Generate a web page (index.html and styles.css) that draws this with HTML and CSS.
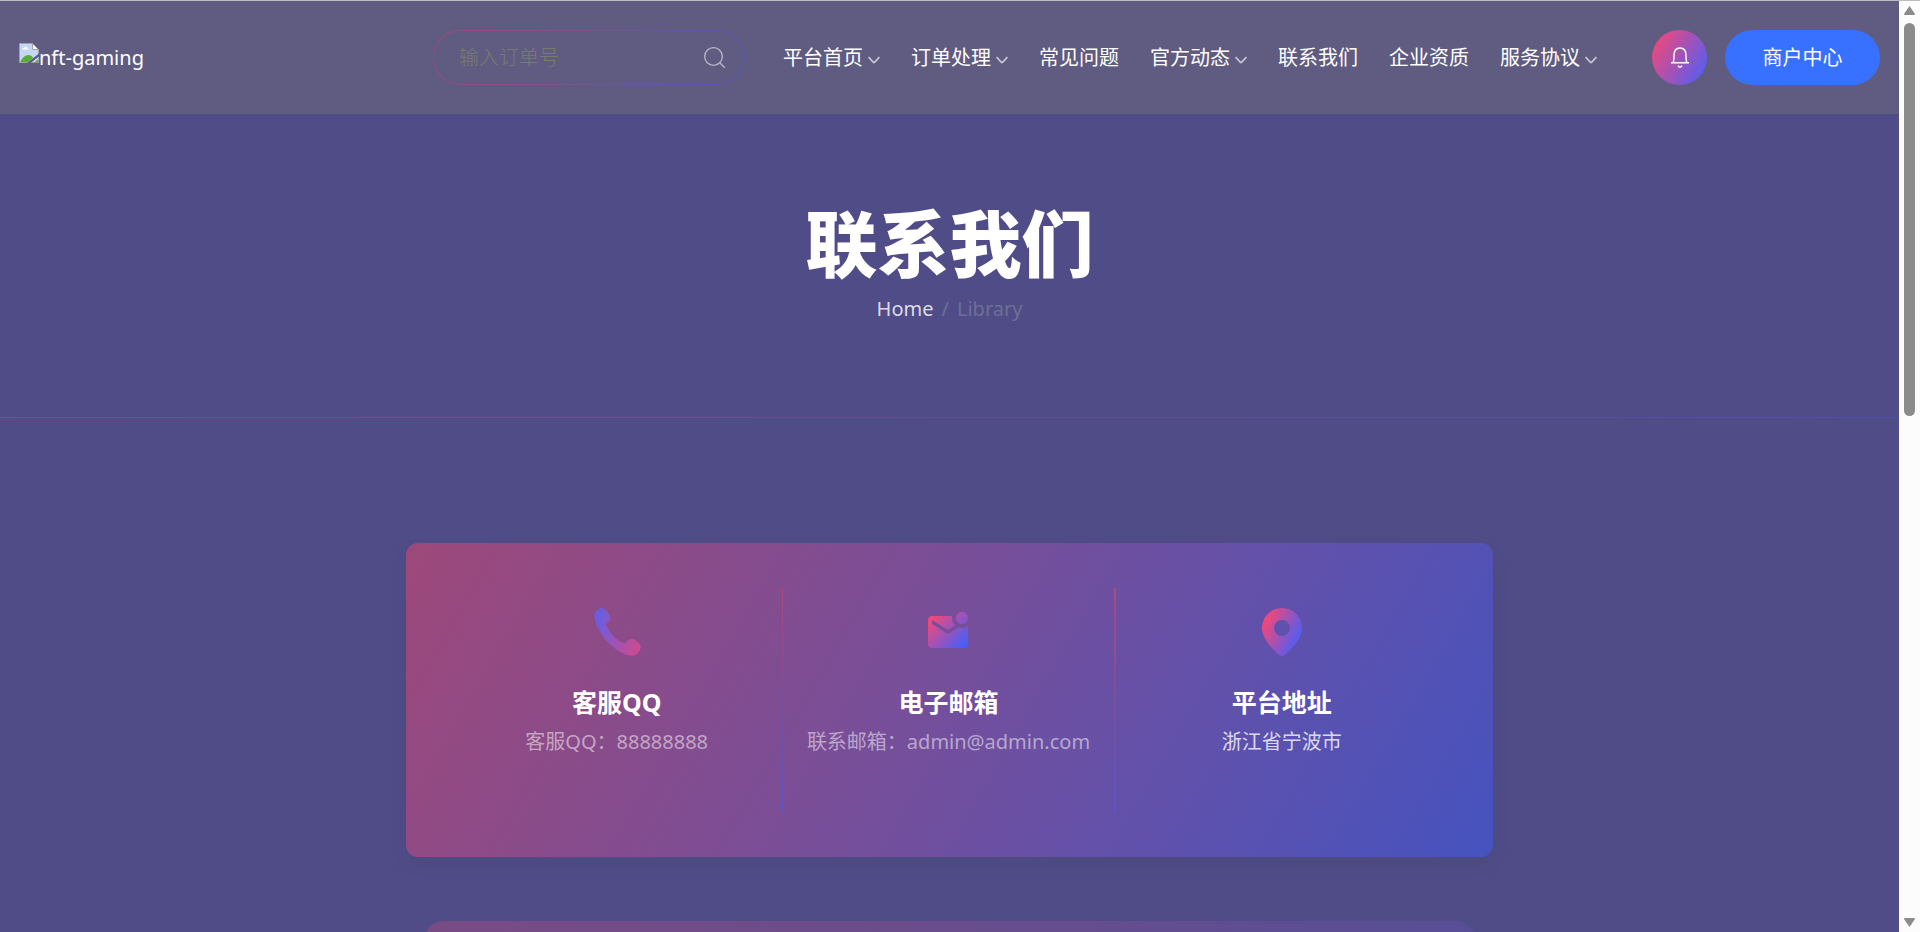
FILE: index.html
```html
<!DOCTYPE html>
<html lang="zh-CN">
<head>
<meta charset="utf-8">
<title>联系我们</title>
<link rel="stylesheet" href="styles.css">
</head>
<body>
<div class="page">
  <header class="header">
    <a class="logo" href="#">
      <svg class="logo-icon" viewBox="0 0 20 20" aria-hidden="true">
        <path d="M.5.5h13l6 6v13H.5z" fill="#c6d6f5" stroke="#a3a3a3"/>
        <path d="M3 6.500q0-1.500 2-1.500 1-2 2.500-1 1 .5 1 1.500 1.500 0 1.500 1z" fill="#fff"/>
        <path d="M1 19q3-6 8-7 4 0 5 3l-5 4z" fill="#57ad35"/>
        <path d="M13.500.5v6h6z" fill="#fff" stroke="#a3a3a3"/>
        <path d="M20 10.500v3L11.500 20H8z" fill="#605b80"/>
        <path d="M15 19.500l4-3v3z" fill="#57ad35"/>
      </svg>
      <span>nft-gaming</span>
    </a>
    <form class="search">
      <input class="search-input" type="text" placeholder="输入订单号" aria-label="输入订单号">
      <button class="search-button" type="button" aria-label="搜索">
        <svg class="search-icon" viewBox="0 0 22 22"><circle cx="9.500" cy="9.500" r="8.800"/><path d="M15.800 15.800l5 5"/></svg>
      </button>
    </form>
    <nav class="nav">
      <a href="#">平台首页<svg class="chevron" viewBox="0 0 12 8"><path d="M.5 1l4.800 5.200q.7.700 1.400 0L11.500 1"/></svg></a>
      <a href="#">订单处理<svg class="chevron" viewBox="0 0 12 8"><path d="M.5 1l4.800 5.200q.7.700 1.400 0L11.500 1"/></svg></a>
      <a href="#">常见问题</a>
      <a href="#">官方动态<svg class="chevron" viewBox="0 0 12 8"><path d="M.5 1l4.800 5.200q.7.700 1.400 0L11.500 1"/></svg></a>
      <a href="#">联系我们</a>
      <a href="#">企业资质</a>
      <a href="#">服务协议<svg class="chevron" viewBox="0 0 12 8"><path d="M.5 1l4.800 5.200q.7.700 1.400 0L11.500 1"/></svg></a>
    </nav>
    <div class="actions">
      <button class="bell" type="button" aria-label="通知">
        <svg class="bell-icon" viewBox="0 0 20 22"><path d="M1 15.800h18M3.200 15.500C4 13.500 4 11.500 4 8.500 4 4 6 1 10 1s6 3 6 7.500c0 3 0 5 .8 7M8 18.800q2 2.600 4 0"/></svg>
      </button>
      <a class="merchant" href="#">商户中心</a>
    </div>
  </header>

  <section class="hero">
    <h1>联系我们</h1>
    <ol class="breadcrumb">
      <li><a href="#">Home</a></li>
      <li>Library</li>
    </ol>
  </section>

  <main class="content">
    <section class="contact">
      <article class="contact-item">
        <svg class="contact-icon" viewBox="0 0 144 144" aria-hidden="true">
          <defs><linearGradient id="g-phone" x1="1" y1=".7" x2="0" y2=".4"><stop stop-color="#cf4a8e"/><stop offset="1" stop-color="#6a5de0"/></linearGradient></defs>
          <path fill="url(#g-phone)" d="M26 0C34 0 52 18 52 30C52 40 38 44 40 51C48 72 76 104 94 105C101 105 104 92 116 92C126 92 143 107 143 117C143 128 130 143 117 143C70 143 4 70 4 22C4 14 16 0 26 0Z"/>
        </svg>
        <h2>客服QQ</h2>
        <p>客服QQ：88888888</p>
      </article>
      <article class="contact-item">
        <svg class="contact-icon" viewBox="0 0 24 24" aria-hidden="true">
          <defs><linearGradient id="g-mail" gradientUnits="userSpaceOnUse" x1="3" y1="5" x2="20" y2="20"><stop stop-color="#f74775"/><stop offset="1" stop-color="#3f60ff"/></linearGradient></defs>
          <path fill="url(#g-mail)" d="M22 8.980V18c0 1.100-.9 2-2 2H4c-1.100 0-2-.9-2-2V6c0-1.100.9-2 2-2h10.100c-.06.32-.1.66-.1 1 0 1.480.65 2.790 1.670 3.710L12 11 4 6v2l8 5 5.300-3.320c.54.2 1.100.32 1.700.32 1.130 0 2.160-.39 3-1.020zM16 5c0 1.660 1.340 3 3 3s3-1.340 3-3-1.340-3-3-3-3 1.340-3 3z"/>
        </svg>
        <h2>电子邮箱</h2>
        <p>联系邮箱：admin@admin.com</p>
      </article>
      <article class="contact-item">
        <svg class="contact-icon" viewBox="0 0 24 24" aria-hidden="true">
          <defs><linearGradient id="g-pin" gradientUnits="userSpaceOnUse" x1="3" y1="6" x2="20" y2="14"><stop stop-color="#f74775"/><stop offset="1" stop-color="#5a5cec"/></linearGradient></defs>
          <path fill="url(#g-pin)" d="M12 0A10 10 0 0 0 2 10C2 15.500 8 21.500 11 23.700q1 .6 2 0C16 21.500 22 15.500 22 10A10 10 0 0 0 12 0Zm0 6a4 4 0 1 1 0 8 4 4 0 0 1 0-8Z"/>
        </svg>
        <h2>平台地址</h2>
        <p class="address">浙江省宁波市</p>
      </article>
    </section>
    <section class="panel"></section>
  </main>
</div>

<div class="scrollbar" aria-hidden="true">
  <svg class="scroll-arrow" viewBox="0 0 11 9"><path d="M5.500 0L11 8q0 1-1 1H1Q0 9 0 8z"/></svg>
  <div class="scroll-track"><div class="scroll-thumb"></div></div>
  <svg class="scroll-arrow" viewBox="0 0 11 9"><path d="M5.500 9L11 1q0-1-1-1H1Q0 0 0 1z"/></svg>
</div>
</body>
</html>
```

FILE: styles.css
```css
* {
  box-sizing: border-box;
}

body {
  margin: 0;
  display: flex;
  height: 100vh;
  overflow: hidden;
  border-top: 1px solid #bbbcbd;
  background: #504c88;
  color: #fff;
  font: 400 20px/30px "Noto Sans", "Noto Sans CJK SC", sans-serif;
}

a {
  color: inherit;
  text-decoration: none;
}

button {
  padding: 0;
  border: 0;
  background: none;
  font: inherit;
  cursor: pointer;
}

.page {
  flex: 1;
  min-width: 0;
}

/* Header */
.header {
  display: flex;
  align-items: center;
  height: 113px;
  padding: 0 19px;
  background: #605b80;
}

.logo {
  display: flex;
  align-items: flex-start;
  margin-right: auto;
}

.logo-icon {
  width: 20px;
  height: 20px;
}

.search {
  display: flex;
  align-items: center;
  width: 312px;
  height: 55px;
  padding: 0 18px 0 25px;
  border: 1px solid transparent;
  border-radius: 28px;
  background:
    linear-gradient(#605b80, #605b80) padding-box,
    linear-gradient(120deg, #9a4a7a, #7a5296 50%, #4f59b8) border-box;
}

.search-input {
  flex: 1;
  min-width: 0;
  padding: 0;
  border: 0;
  outline: 0;
  background: none;
  color: #fff;
  font: 300 20px/30px "Noto Sans", "Noto Sans CJK SC", sans-serif;
}

.search-input::placeholder {
  color: #787b74;
  opacity: 1;
}

.search-button {
  display: flex;
}

.search-icon {
  width: 22px;
  height: 22px;
  fill: none;
  stroke: #b9b7ca;
  stroke-width: 1.3;
}

.nav {
  display: flex;
  gap: 31px;
  margin: 0 55px 0 38px;
}

.nav a {
  display: flex;
  align-items: center;
  gap: 5px;
  white-space: nowrap;
}

.chevron {
  width: 12px;
  height: 8px;
  margin-top: 4px;
  fill: none;
  stroke: #c4c2d2;
  stroke-width: 1.8;
}

.actions {
  display: flex;
  gap: 18px;
}

.bell {
  display: grid;
  place-items: center;
  width: 55px;
  height: 55px;
  border-radius: 50%;
  background: linear-gradient(120deg, #f74775 5%, #4560ff);
}

.bell-icon {
  width: 20px;
  height: 22px;
  fill: none;
  stroke: #fff;
  stroke-width: 1.4;
}

.merchant {
  width: 155px;
  padding: 13px 0 12px;
  border-radius: 28px;
  background: #3871ff;
  text-align: center;
}

/* Page title */
.hero {
  padding: 81px 0 93px;
  border-bottom: 1px solid;
  border-image: linear-gradient(90deg, #7b4c86, #654d8c 50%, #4f4fa8) 1;
  text-align: center;
}

.hero h1 {
  margin: 0 0 3px;
  font-size: 72px;
  font-weight: 900;
  line-height: 96px;
}

.breadcrumb {
  display: flex;
  justify-content: center;
  margin: 0;
  padding: 0;
  list-style: none;
  color: #6c7095;
}

.breadcrumb a {
  color: #dcdbe7;
}

.breadcrumb li + li::before {
  content: "/";
  padding: 0 8px;
}

/* Contact cards */
.content {
  width: 1087px;
  max-width: 100%;
  margin: 0 auto;
  padding-top: 125px;
}

.contact {
  display: grid;
  grid-template-columns: repeat(3, 1fr);
  padding: 45px;
  border-radius: 12px;
  background: linear-gradient(120deg, #9d487a, #744f9c 50%, #4653bf);
  box-shadow: 0 8px 16px rgba(40, 60, 60, 0.1);
}

.contact-item {
  padding: 20px 0 55px;
  text-align: center;
}

.contact-item:not(:last-child) {
  border-right: 1px solid;
  border-image: linear-gradient(#b04880, #7a4f9c 50%, #5a55c8) 1;
}

.contact-item:nth-child(2) {
  border-right-width: 2px;
}

.contact-icon {
  display: block;
  width: 48px;
  height: 48px;
  margin: 0 auto 31px;
}

.contact-item h2 {
  margin: 0 0 10px;
  font-size: 25px;
  line-height: 30px;
}

.contact-item p {
  margin: 0;
  color: rgba(255, 255, 255, 0.5);
}

.contact-item .address {
  color: rgba(255, 255, 255, 0.8);
}

.panel {
  height: 400px;
  margin: 64px 18px 0;
  border-radius: 20px;
  background: linear-gradient(120deg, #794b85, #664d8e 50%, #504f9c);
}

/* Scrollbar */
.scrollbar {
  display: flex;
  flex-direction: column;
  align-items: center;
  width: 21px;
  padding: 5px 0;
  background: #fcfcfc;
}

.scroll-arrow {
  width: 11px;
  height: 9px;
  fill: #8b8b8b;
}

.scroll-track {
  flex: 1;
  padding: 8px 0;
}

.scroll-thumb {
  width: 11px;
  height: 393px;
  border-radius: 6px;
  background: #8b8b8b;
}
```
